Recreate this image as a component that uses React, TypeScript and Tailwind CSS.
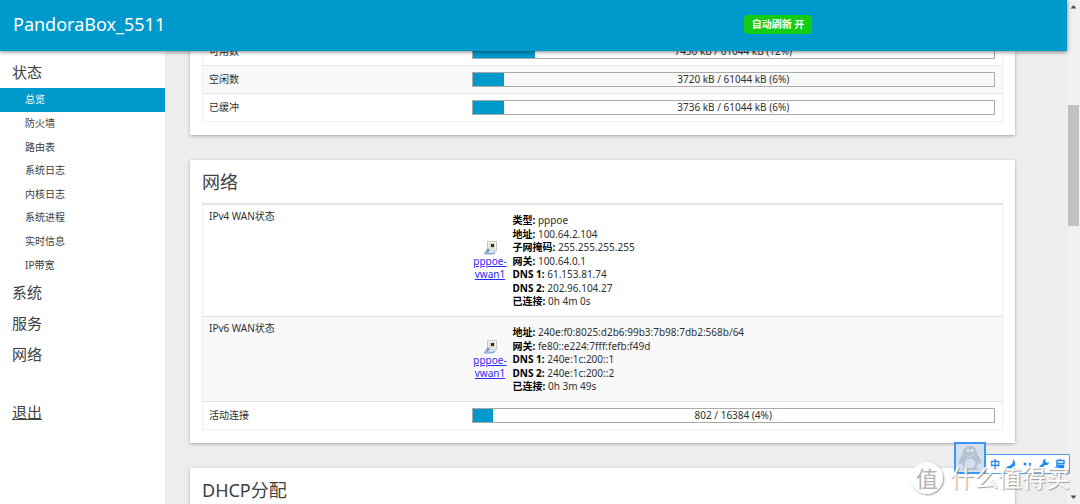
import type { ReactNode } from 'react'

type Usage = { label: string; text: string; percent: number }
type Wan = { label: string; lines: [string, string][] }

const statusLinks = [
  '总览',
  '防火墙',
  '路由表',
  '系统日志',
  '内核日志',
  '系统进程',
  '实时信息',
  'IP带宽',
]

const memory: Usage[] = [
  { label: '可用数', text: '7456 kB / 61044 kB (12%)', percent: 12 },
  { label: '空闲数', text: '3720 kB / 61044 kB (6%)', percent: 6 },
  { label: '已缓冲', text: '3736 kB / 61044 kB (6%)', percent: 6 },
]

const wans: Wan[] = [
  {
    label: 'IPv4 WAN状态',
    lines: [
      ['类型', 'pppoe'],
      ['地址', '100.64.2.104'],
      ['子网掩码', '255.255.255.255'],
      ['网关', '100.64.0.1'],
      ['DNS 1', '61.153.81.74'],
      ['DNS 2', '202.96.104.27'],
      ['已连接', '0h 4m 0s'],
    ],
  },
  {
    label: 'IPv6 WAN状态',
    lines: [
      ['地址', '240e:f0:8025:d2b6:99b3:7b98:7db2:568b/64'],
      ['网关', 'fe80::e224:7fff:fefb:f49d'],
      ['DNS 1', '240e:1c:200::1'],
      ['DNS 2', '240e:1c:200::2'],
      ['已连接', '0h 3m 49s'],
    ],
  },
]

function Card({ title, children }: { title?: string; children?: ReactNode }) {
  return (
    <section className="bg-white px-3 pb-[13px] shadow-[0_1px_3px_rgba(0,0,0,0.3)]">
      {title && (
        <h2 className="h-[43px] pt-1 text-[18px] leading-[36px] text-[#404040]">
          {title}
        </h2>
      )}
      {children}
    </section>
  )
}

function UsageRow({ label, text, percent }: Usage) {
  return (
    <tr className="border-t border-[#e4e4e4] even:bg-[#f9f9f9]">
      <th scope="row" className="w-[33%] px-[6px] text-left font-normal">
        {label}
      </th>
      <td className="h-7 pr-[7px] pl-[5px]">
        <div className="relative h-[15px] border border-[#aaa]">
          <div className="h-full bg-[#0099cc]" style={{ width: `${percent}%` }} />
          <span className="absolute inset-0 text-center leading-[13px]">{text}</span>
        </div>
      </td>
    </tr>
  )
}

function PortIcon() {
  return (
    <svg viewBox="0 0 14 14" className="h-[14px] w-[14px]" aria-hidden="true">
      <rect x="4.5" y="0.5" width="9" height="9" fill="#f2f2ee" stroke="#c8c8c4" />
      <rect x="6" y="2" width="6" height="6" fill="#dcdccc" />
      <rect x="8" y="3" width="3" height="3" fill="#30302a" />
      <path d="M1 12.500h9l2-1.500" fill="none" stroke="#8fb0dc" strokeWidth="2" />
      <path d="M2 11l3-4 2 2-2 3z" fill="#7f9cc4" />
    </svg>
  )
}

function WanRow({ label, lines }: Wan) {
  return (
    <tr className="border-t border-[#e4e4e4] even:bg-[#f9f9f9]">
      <th scope="row" className="px-[6px] pt-[5px] text-left align-top font-normal">
        {label}
      </th>
      <td className="pt-[9px] pr-[7px] pb-2 pl-[5px]">
        <div className="flex items-center gap-1">
          <div className="flex w-[37px] flex-col items-center text-center">
            <PortIcon />
            <a href="#wan" className="text-[#2a2aee] underline">
              pppoe-
              <br />
              vwan1
            </a>
          </div>
          <div
            className={
              lines.length > 5
                ? 'flex h-[94px] flex-col justify-between'
                : 'flex h-[67px] flex-col justify-between'
            }
          >
            {lines.map(([name, value]) => (
              <div key={name}>
                <strong className="text-black">{name}:</strong> {value}
              </div>
            ))}
          </div>
        </div>
      </td>
    </tr>
  )
}

function Sidebar() {
  return (
    <nav className="w-[165px] shrink-0 bg-white pt-[6px] text-[15px] leading-[31px] text-[#404040]">
      <a href="#status" className="block pl-3">
        状态
      </a>
      <ul className="grid h-[189px] auto-rows-fr text-[10px]">
        {statusLinks.map((name, i) => (
          <li key={name}>
            <a
              href={`#${name}`}
              className={
                i === 0
                  ? 'flex h-full items-center bg-[#0099cc] pl-[25px] text-white'
                  : 'flex h-full items-center pl-[25px]'
              }
            >
              {name}
            </a>
          </li>
        ))}
      </ul>
      {['系统', '服务', '网络'].map((name) => (
        <a key={name} href={`#${name}`} className="block pl-3">
          {name}
        </a>
      ))}
      <a href="#logout" className="mt-[27px] block pl-3 underline">
        退出
      </a>
    </nav>
  )
}

function Scrollbar() {
  return (
    <div className="flex w-[13px] shrink-0 flex-col items-center bg-[#f1f1f1]">
      <svg viewBox="0 0 13 13" className="h-[13px] w-[13px] fill-[#505050]">
        <path d="M3.5 8.5h6l-3-3.500z" />
      </svg>
      <div className="mt-[92px] h-[121px] w-[11px] bg-[#c1c1c1]" />
      <svg viewBox="0 0 13 13" className="mt-auto h-[13px] w-[13px] fill-[#505050]">
        <path d="M3.500 4.500h6l-3 3.500z" />
      </svg>
    </div>
  )
}

// 输入法状态栏
function InputMethodBar() {
  return (
    <div className="absolute right-[10px] bottom-[30px] flex items-end text-[#1e88f5]">
      <div className="h-8 w-8 border-2 border-[#3b97f7] bg-[#d5dfeb]">
        <svg viewBox="0 0 28 28" className="h-full w-full" aria-hidden="true">
          <path
            d="M14 2c-5 0-7 4-7 8-2 3-5 7-4 10 1 1 3-1 3-2 0 3 1 4 2 5-2 1-2 3 0 3h12c2 0 2-2 0-3 1-1 2-2 2-5 1 1 2 3 3 2 1-3-2-7-4-10 0-4-2-8-7-8z"
            fill="#b3c1d0"
          />
          <ellipse cx="14" cy="19.500" rx="5.500" ry="5" fill="#d5dfeb" />
          <path d="M8 10q6 4 12 0-6 6-12 0z" fill="#d5dfeb" />
          <circle cx="12" cy="6.500" r="1.500" fill="#e6edf5" />
          <circle cx="16" cy="6.500" r="1.500" fill="#e6edf5" />
        </svg>
      </div>
      <div className="flex h-5 w-[84px] items-center justify-between border border-l-0 border-[#4a9ff8] bg-white px-1 text-[10px] font-bold">
        <span>中</span>
        <svg viewBox="0 0 10 10" className="h-[10px] w-[10px] fill-current">
          <path d="M7 0c1 4-2 7-7 8 4 3 10 1 9-4 0-2-1-3-2-4z" />
        </svg>
        <svg viewBox="0 0 10 10" className="h-[10px] w-[10px] fill-current">
          <circle cx="2" cy="5" r="1.500" />
          <path d="M6 4h2v2L6.500 8z" />
        </svg>
        <svg viewBox="0 0 10 10" className="h-[10px] w-[10px] fill-current">
          <path d="M0 8l4-4c-1-2 1-4 3-4L6 2l2 2 2-1c0 2-2 4-4 3L2 10z" />
        </svg>
        <svg viewBox="0 0 10 10" className="h-[10px] w-[10px] fill-none stroke-current">
          <path d="M2 1.500h7v3H2zM2 4v3L.5 9.500M3.500 6.500h5v3h-5zM3.500 8h5M5 0v1.500" strokeWidth="1.400" />
        </svg>
      </div>
    </div>
  )
}

function Watermark() {
  return (
    <div className="absolute right-[10px] bottom-[10px] flex items-center gap-[7px] text-white">
      <span className="flex h-8 w-8 items-center justify-center rounded-full bg-white/90 text-[22px] text-[#b4b4b4] shadow-[1px_1px_2px_rgba(0,0,0,0.4)]">
        值
      </span>
      <span className="text-[24px] leading-8 [text-shadow:1px_1px_1px_#999]">
        什么值得买
      </span>
    </div>
  )
}

export default function App() {
  return (
    <div className="relative flex h-screen overflow-hidden bg-[#ededed] font-['Noto_Sans','Noto_Sans_CJK_SC',sans-serif] text-[10px] leading-[13px] text-[#303030]">
      <div className="flex min-w-0 flex-1 flex-col">
        <header className="z-10 flex h-[51px] shrink-0 items-center bg-[#0099cc] px-[13px] pb-[3px] shadow-[0_1px_4px_rgba(0,0,0,0.5)]">
          <h1 className="flex-1 text-[18px] leading-6 text-white">PandoraBox_5511</h1>
          <button
            type="button"
            className="mr-[242px] h-[19px] w-[68px] rounded-sm bg-[#14cc14] font-bold text-white"
          >
            自动刷新 开
          </button>
        </header>
        <div className="flex min-h-0 flex-1">
          <Sidebar />
          <main className="flex-1 overflow-hidden pr-[52px] pl-[25px]">
            {/* scrolled part way under the header */}
            <div className="-mt-[14px] flex flex-col gap-[25px]">
              <Card>
                <table className="w-full table-fixed border-collapse border border-[#f0f0f0]">
                  <tbody>
                    {memory.map((row) => (
                      <UsageRow key={row.label} {...row} />
                    ))}
                  </tbody>
                </table>
              </Card>
              <Card title="网络">
                <table className="w-full table-fixed border-collapse border border-t-2 border-[#f0f0f0] border-t-[#e6e6e6]">
                  <colgroup>
                    <col className="w-[33%]" />
                    <col />
                  </colgroup>
                  <tbody>
                    {wans.map((wan) => (
                      <WanRow key={wan.label} {...wan} />
                    ))}
                    <UsageRow label="活动连接" text="802 / 16384 (4%)" percent={4} />
                  </tbody>
                </table>
              </Card>
              <Card title="DHCP分配" />
            </div>
          </main>
        </div>
      </div>
      <Scrollbar />
      <InputMethodBar />
      <Watermark />
    </div>
  )
}
